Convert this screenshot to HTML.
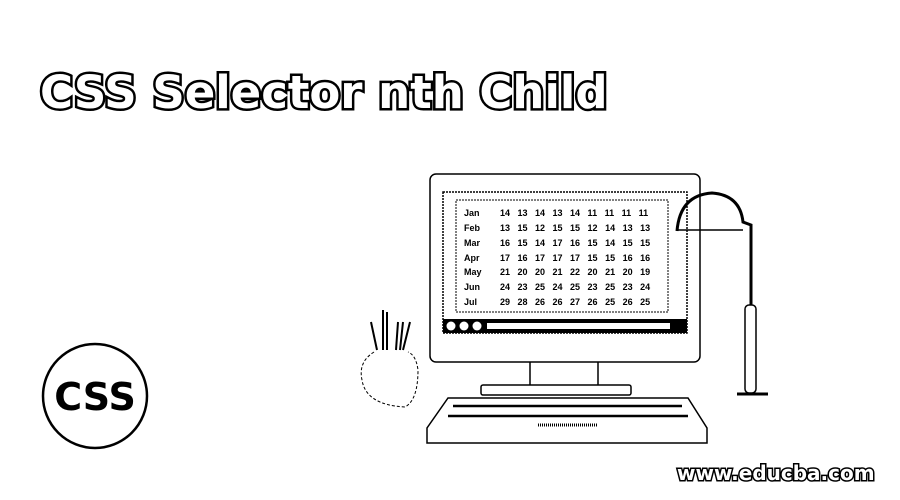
<!DOCTYPE html><html><head><style>
body{margin:0;width:900px;height:500px;background:#fff;overflow:hidden;position:relative;font-family:"Liberation Sans",sans-serif}
.t{position:absolute;left:40px;top:66px;font:bold 45px "DejaVu Sans",sans-serif;color:#fff;-webkit-text-stroke:5px #000;paint-order:stroke fill;letter-spacing:0px;white-space:nowrap}
.w{position:absolute;left:677px;top:461px;font:bold 20px "DejaVu Sans",sans-serif;color:#fff;-webkit-text-stroke:3px #000;paint-order:stroke fill;white-space:nowrap;letter-spacing:0px}
</style></head><body>
<div class="t">CSS Selector nth Child</div>
<svg width="900" height="500" style="position:absolute;left:0;top:0">
<circle cx="95" cy="396" r="52" fill="none" stroke="#000" stroke-width="2.5"/>
<text x="95" y="410" text-anchor="middle" font-family="DejaVu Sans" font-weight="bold" font-size="38" fill="#000">CSS</text>
<g fill="none" stroke="#000" stroke-width="1.5">
<rect x="430" y="174" width="270" height="188" rx="6"/>
<rect x="443" y="192" width="244" height="141" stroke-dasharray="2 1"/>
<rect x="456" y="200" width="212" height="112" stroke-width="1" stroke-dasharray="2 1"/>
<path d="M530 362V385M598 362V385"/>
<rect x="481" y="385" width="150" height="10" rx="2"/>
<path d="M448 398H688L707 428V443H427V428Z"/>
<path d="M453 406H682M448 416H688" stroke-width="2.5"/>
<path d="M538 425H598" stroke-width="3" stroke-dasharray="1 1"/>
<path d="M677 231Q680 195 712 193Q740 195 743 222L751 225V305" stroke-width="3"/>
<path d="M677 230H743"/>
<rect x="745" y="305" width="11" height="88" rx="4"/>
<path d="M737 394H768" stroke-width="3"/>
<path d="M374 352Q358 362 362 380Q366 405 405 407Q418 400 418 370Q416 355 408 352" stroke-width="1" stroke-dasharray="3 2"/>
<path d="M371 322L377 350M383 310L383 350M387 312L387 350M398 322L396 350M403 322L400 350M410 322L403 350" stroke-width="2"/>
</g>
<rect x="443" y="319" width="244" height="14" fill="#000"/>
<circle cx="451" cy="326" r="4.5" fill="#fff"/><circle cx="464" cy="326" r="4.5" fill="#fff"/><circle cx="477" cy="326" r="4.5" fill="#fff"/>
<rect x="487" y="323" width="183" height="6" fill="#fff"/>
<g font-family="Liberation Sans" font-size="9" fill="#000" font-weight="bold">
<text x="464" y="216">Jan</text><text x="464" y="231">Feb</text><text x="464" y="246">Mar</text><text x="464" y="261">Apr</text><text x="464" y="275">May</text><text x="464" y="290">Jun</text><text x="464" y="305">Jul</text>
</g>
<g font-family="Liberation Sans" font-size="9" fill="#000" font-weight="bold" word-spacing="5">
<text x="500" y="216">14 13 14 13 14 11 11 11 11</text>
<text x="500" y="231">13 15 12 15 15 12 14 13 13</text>
<text x="500" y="246">16 15 14 17 16 15 14 15 15</text>
<text x="500" y="261">17 16 17 17 17 15 15 16 16</text>
<text x="500" y="275">21 20 20 21 22 20 21 20 19</text>
<text x="500" y="290">24 23 25 24 25 23 25 23 24</text>
<text x="500" y="305">29 28 26 26 27 26 25 26 25</text>
</g>
</svg>
<div class="w">www.educba.com</div>
</body></html>
